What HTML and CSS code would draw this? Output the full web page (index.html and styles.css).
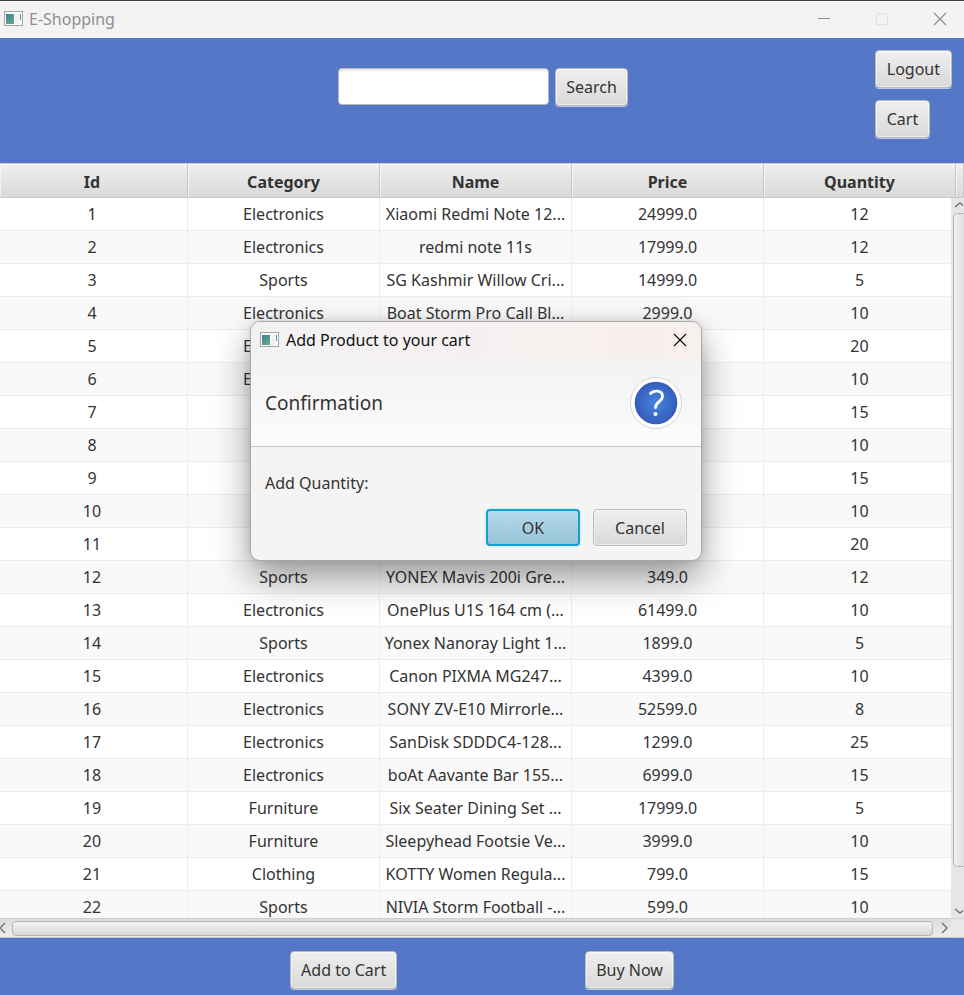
FILE: index.html
```html
<!DOCTYPE html>
<html lang="en">
<head>
<meta charset="utf-8">
<title>E-Shopping</title>
<link rel="stylesheet" href="styles.css">
</head>
<body>
<div class="window">
  <header class="titlebar">
    <svg class="app-icon" width="20" height="16" viewBox="0 0 20 16" aria-hidden="true">
      <defs><linearGradient id="pane" x1="0" y1="0" x2="0.6" y2="1"><stop offset="0" stop-color="#4a7a9a"/><stop offset="1" stop-color="#5cab80"/></linearGradient></defs>
      <rect x="0.5" y="0.5" width="18" height="14" fill="#fafcfc" stroke="#a0a5aa"/>
      <rect x="2" y="3" width="8" height="10" fill="url(#pane)"/>
      <rect x="11" y="3" width="4" height="10" fill="#edf1f0"/>
      <rect x="16" y="3" width="1" height="6" fill="#4f9a94"/>
    </svg>
    <span class="titlebar-text">E-Shopping</span>
    <div class="window-controls">
      <button type="button" class="icon-button" aria-label="Minimize"><svg width="14" height="14" viewBox="0 0 14 14"><path d="M1 6.5h12" stroke="#8c8c8c"/></svg></button>
      <button type="button" class="icon-button" aria-label="Maximize" disabled><svg width="14" height="14" viewBox="0 0 14 14"><rect x="1.5" y="1.5" width="11" height="11" rx="1" fill="none" stroke="#dedede"/></svg></button>
      <button type="button" class="icon-button" aria-label="Close"><svg width="14" height="14" viewBox="0 0 14 14"><path d="M1 1l12 12M13 1L1 13" stroke="#8c8c8c" stroke-width="1.2"/></svg></button>
    </div>
  </header>

  <div class="toolbar">
    <form class="search" role="search">
      <input class="search-field" type="text" aria-label="Search products">
      <button type="button" class="button">Search</button>
    </form>
    <nav class="account">
      <button type="button" class="button">Logout</button>
      <button type="button" class="button">Cart</button>
    </nav>
  </div>

  <main class="catalog">
    <div class="table-view">
      <table class="products">
        <colgroup><col class="col-id"><col><col><col><col><col class="col-filler"></colgroup>
        <thead>
          <tr><th>Id</th><th>Category</th><th>Name</th><th>Price</th><th>Quantity</th><th></th></tr>
        </thead>
        <tbody>
          <tr><td>1</td><td>Electronics</td><td>Xiaomi Redmi Note 12...</td><td>24999.0</td><td>12</td><td></td></tr>
          <tr><td>2</td><td>Electronics</td><td>redmi note 11s</td><td>17999.0</td><td>12</td><td></td></tr>
          <tr><td>3</td><td>Sports</td><td>SG Kashmir Willow Cri...</td><td>14999.0</td><td>5</td><td></td></tr>
          <tr><td>4</td><td>Electronics</td><td>Boat Storm Pro Call Bl...</td><td>2999.0</td><td>10</td><td></td></tr>
          <tr><td>5</td><td>Electronics</td><td></td><td></td><td>20</td><td></td></tr>
          <tr><td>6</td><td>Electronics</td><td></td><td></td><td>10</td><td></td></tr>
          <tr><td>7</td><td></td><td></td><td></td><td>15</td><td></td></tr>
          <tr><td>8</td><td></td><td></td><td></td><td>10</td><td></td></tr>
          <tr><td>9</td><td></td><td></td><td></td><td>15</td><td></td></tr>
          <tr><td>10</td><td></td><td></td><td></td><td>10</td><td></td></tr>
          <tr><td>11</td><td></td><td></td><td></td><td>20</td><td></td></tr>
          <tr><td>12</td><td>Sports</td><td>YONEX Mavis 200i Gre...</td><td>349.0</td><td>12</td><td></td></tr>
          <tr><td>13</td><td>Electronics</td><td>OnePlus U1S 164 cm (...</td><td>61499.0</td><td>10</td><td></td></tr>
          <tr><td>14</td><td>Sports</td><td>Yonex Nanoray Light 1...</td><td>1899.0</td><td>5</td><td></td></tr>
          <tr><td>15</td><td>Electronics</td><td>Canon PIXMA MG247...</td><td>4399.0</td><td>10</td><td></td></tr>
          <tr><td>16</td><td>Electronics</td><td>SONY ZV-E10 Mirrorle...</td><td>52599.0</td><td>8</td><td></td></tr>
          <tr><td>17</td><td>Electronics</td><td>SanDisk SDDDC4-128...</td><td>1299.0</td><td>25</td><td></td></tr>
          <tr><td>18</td><td>Electronics</td><td>boAt Aavante Bar 155...</td><td>6999.0</td><td>15</td><td></td></tr>
          <tr><td>19</td><td>Furniture</td><td>Six Seater Dining Set ...</td><td>17999.0</td><td>5</td><td></td></tr>
          <tr><td>20</td><td>Furniture</td><td>Sleepyhead Footsie Ve...</td><td>3999.0</td><td>10</td><td></td></tr>
          <tr><td>21</td><td>Clothing</td><td>KOTTY Women Regula...</td><td>799.0</td><td>15</td><td></td></tr>
          <tr><td>22</td><td>Sports</td><td>NIVIA Storm Football -...</td><td>599.0</td><td>10</td><td></td></tr>
        </tbody>
      </table>
      <div class="scroll-y" aria-hidden="true">
        <svg class="arrow-y" width="12" height="15" viewBox="0 0 12 15"><path d="M4 9l5-4 5 4" fill="none" stroke="#777" stroke-width="1.5"/></svg>
        <div class="thumb-y"></div>
        <svg class="arrow-y" width="12" height="15" viewBox="0 0 12 15"><path d="M4 6l5 4 5-4" fill="none" stroke="#777" stroke-width="1.5"/></svg>
      </div>
    </div>
    <div class="scroll-x" aria-hidden="true">
      <svg width="12" height="14" viewBox="0 0 12 14"><path d="M5 2L0 7l5 5" fill="none" stroke="#777" stroke-width="1.5"/></svg>
      <div class="thumb-x"></div>
      <svg width="18" height="14" viewBox="0 0 18 14"><path d="M9 2l5 5-5 5" fill="none" stroke="#777" stroke-width="1.5"/></svg>
      <div class="corner"></div>
    </div>
  </main>

  <footer class="actions">
    <button type="button" class="button">Add to Cart</button>
    <button type="button" class="button">Buy Now</button>
  </footer>

  <section class="dialog" role="dialog" aria-labelledby="dialog-title">
    <div class="dialog-titlebar">
      <svg class="app-icon" width="20" height="16" viewBox="0 0 20 16" aria-hidden="true">
        <rect x="0.5" y="0.5" width="18" height="14" fill="#fafcfc" stroke="#a0a5aa"/>
        <rect x="2" y="3" width="8" height="10" fill="url(#pane)"/>
        <rect x="11" y="3" width="4" height="10" fill="#edf1f0"/>
        <rect x="16" y="3" width="1" height="6" fill="#4f9a94"/>
      </svg>
      <span id="dialog-title" class="dialog-title">Add Product to your cart</span>
      <button type="button" class="icon-button dialog-close" aria-label="Close"><svg width="14" height="14" viewBox="0 0 14 14"><path d="M1 1l12 12M13 1L1 13" stroke="#111" stroke-width="1.2"/></svg></button>
    </div>
    <div class="dialog-header">
      <h1 class="dialog-heading">Confirmation</h1>
      <svg width="54" height="54" viewBox="0 0 54 54" aria-hidden="true">
        <defs><radialGradient id="badge"><stop offset="0" stop-color="#4684dc"/><stop offset="1" stop-color="#355dbb"/></radialGradient></defs>
        <circle cx="27" cy="27" r="25.5" fill="#fff" stroke="#d3d3d3"/>
        <circle cx="27" cy="27" r="21.3" fill="url(#badge)"/>
        <path d="M21.500 17.500c3-3.500 12-3.500 12 2.800 0 5.200-7 5.500-7 11.200" fill="none" stroke="#fff" stroke-width="2.800" stroke-linecap="round"/>
        <circle cx="26.500" cy="38" r="2" fill="#fff"/>
      </svg>
    </div>
    <div class="dialog-body">
      <p class="dialog-message">Add Quantity:</p>
      <div class="dialog-buttons">
        <button type="button" class="button dialog-button button-default">OK</button>
        <button type="button" class="button dialog-button">Cancel</button>
      </div>
    </div>
  </section>
</div>
</body>
</html>
```
FILE: styles.css
```css
* {
  box-sizing: border-box;
}

body {
  margin: 0;
  font-family: "Noto Sans", "Open Sans", sans-serif;
  font-size: 16px;
  line-height: 24px;
  color: #333;
}

.window {
  position: relative;
  display: flex;
  flex-direction: column;
  height: 100vh;
  overflow: hidden;
  background: #5478c7;
}

/* Title bar */
.titlebar {
  display: flex;
  align-items: center;
  flex: none;
  height: 38px;
  padding: 0 17px 2px 4px;
  border-top: 1px solid #404048;
  background: #f3f3f3;
}

.app-icon {
  flex: none;
}

.titlebar-text {
  margin-left: 5px;
  color: #8f8f8f;
}

.window-controls {
  display: flex;
  gap: 44px;
  margin-left: auto;
}

.icon-button {
  display: block;
  width: 14px;
  height: 14px;
  padding: 0;
  border: 0;
  background: none;
}

.icon-button svg,
.dialog-header svg,
.scroll-x svg,
.arrow-y {
  display: block;
  flex: none;
}

/* Controls */
.button {
  height: 38px;
  padding: 0 10px;
  border: 1px solid #bababa;
  border-radius: 4px;
  background: linear-gradient(#efefef, #d9d9d9);
  box-shadow: inset 0 0 0 1px rgba(255, 255, 255, 0.5), 0 1px 0 rgba(255, 255, 255, 0.6);
  color: #333;
  font: inherit;
}

.toolbar {
  display: grid;
  grid-template-columns: 1fr auto 1fr;
  flex: none;
  height: 125px;
  padding: 12px 12px 12px 14px;
}

.search {
  display: flex;
  grid-column: 2;
  align-items: flex-start;
  gap: 6px;
  padding-top: 18px;
}

.search-field {
  width: 211px;
  height: 37px;
  padding: 0 8px;
  border: 1px solid #bababa;
  border-radius: 4px;
  background: #fff;
  box-shadow: inset 0 2px 2px #e8e8e8;
  font: inherit;
}

.account {
  display: flex;
  flex-direction: column;
  align-items: flex-start;
  justify-self: end;
  gap: 12px;
}

.account .button {
  padding: 0 11px;
}

/* Product table */
.catalog {
  display: flex;
  flex: 1;
  flex-direction: column;
  min-height: 0;
}

.table-view {
  position: relative;
  flex: 1;
  min-height: 0;
  overflow: hidden;
  background: #fff;
}

.products {
  width: 100%;
  table-layout: fixed;
  border-collapse: separate;
  border-spacing: 0;
  text-align: center;
  white-space: nowrap;
}

.col-id {
  width: 188px;
}

.col-filler {
  width: 8px;
}

.products th {
  height: 35px;
  padding: 2px 0 0;
  border: 1px solid #c8c8c8;
  border-left: 0;
  background: linear-gradient(#efefef, #d9d9d9);
  box-shadow: inset 1px 1px 0 rgba(255, 255, 255, 0.5);
}

.products td {
  height: 33px;
  padding: 0;
  border-right: 1px solid #ededed;
  border-bottom: 1px solid #ededed;
}

.products th:first-child,
.products td:first-child {
  padding-right: 3px;
}

.products tbody tr:nth-child(even) {
  background: #f9f9f9;
}

.scroll-y {
  position: absolute;
  top: 35px;
  right: 0;
  bottom: 0;
  display: flex;
  flex-direction: column;
  width: 13px;
  background: #e6e6e6;
  overflow: hidden;
}

.thumb-y {
  flex: 1;
  width: 14px;
  margin: 0 0 36px 2px;
  border: 1px solid #b5b5b5;
  border-radius: 4px;
  background: linear-gradient(to right, #f2f2f2, #dcdcdc);
}

.scroll-x {
  display: flex;
  align-items: center;
  flex: none;
  height: 20px;
  border-top: 1px solid #d0d0d0;
  border-bottom: 1px solid #c8c8c8;
  background: linear-gradient(#dcdcdc, #eeeeee);
}

.thumb-x {
  flex: 1;
  height: 15px;
  border: 1px solid #b5b5b5;
  border-radius: 4px;
  background: linear-gradient(#f2f2f2, #d9d9d9);
}

.corner {
  align-self: stretch;
  width: 13px;
  background: #e8e8e8;
}

.actions {
  display: flex;
  justify-content: center;
  flex: none;
  gap: 188px;
  padding: 13px 0 6px;
}

/* Confirmation dialog */
.dialog {
  position: absolute;
  top: 321px;
  left: calc(50% - 232px);
  width: 452px;
  border: 1px solid #a8a8a8;
  border-radius: 10px;
  background: #f4f4f4;
  box-shadow: 0 16px 36px rgba(0, 0, 0, 0.4), 0 0 10px rgba(0, 0, 0, 0.1);
  overflow: hidden;
}

.dialog-titlebar {
  display: flex;
  align-items: center;
  height: 37px;
  padding: 0 14px 2px 9px;
  background: linear-gradient(to right, #f3f2f2, #f8efee);
}

.dialog-title {
  margin-left: 6px;
  color: #111;
}

.dialog-close {
  margin-left: auto;
}

.dialog-header {
  display: flex;
  align-items: center;
  justify-content: space-between;
  height: 88px;
  padding: 0 18px 0 14px;
  border-bottom: 1px solid #c4c4c4;
  background: linear-gradient(#f2f2f2, #fcfcfc);
}

.dialog-heading {
  margin: 0;
  font-size: 19px;
  font-weight: 400;
}

.dialog-body {
  padding: 24px 14px 14px;
}

.dialog-message {
  margin: 0;
}

.dialog-buttons {
  display: flex;
  justify-content: flex-end;
  gap: 13px;
  padding-top: 14px;
}

.dialog-button {
  width: 94px;
  height: 37px;
}

.button-default {
  border: 2px solid #159fcd;
  background: linear-gradient(#b3dbec, #98c2d6);
  box-shadow: 0 0 2px #8fd4ec;
}
```
